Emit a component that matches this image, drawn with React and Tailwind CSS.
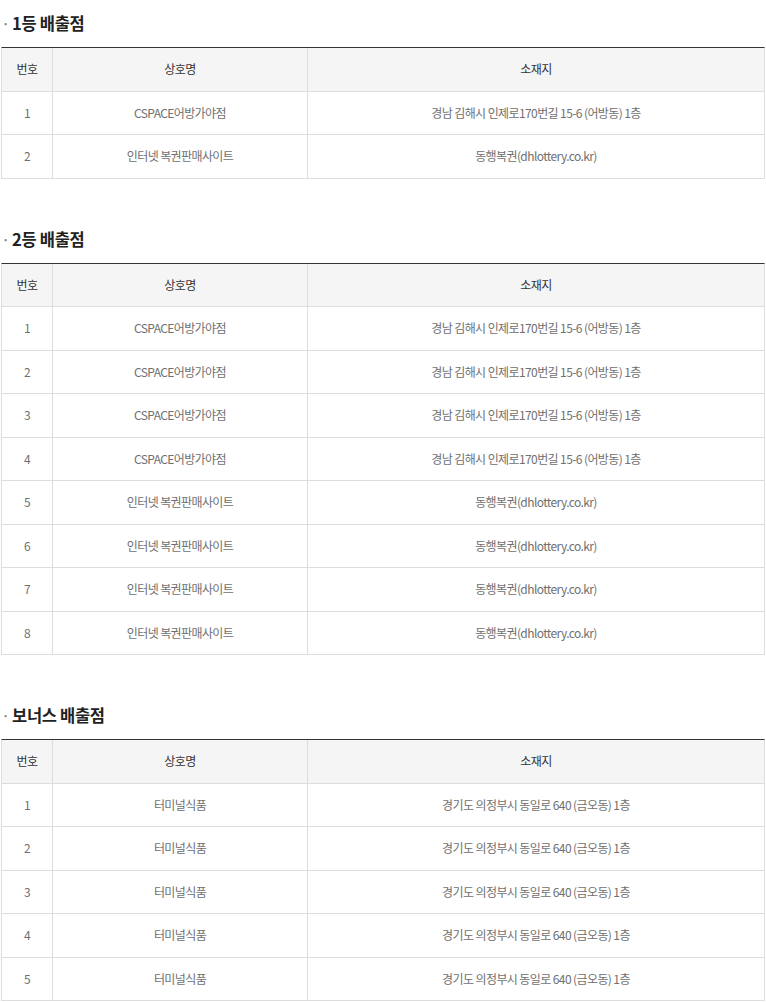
import React from 'react';

const first = [
  { name: 'CSPACE어방가야점', addr: '경남 김해시 인제로170번길 15-6 (어방동) 1층' },
  { name: '인터넷 복권판매사이트', addr: '동행복권(dhlottery.co.kr)' },
];

const second = [
  { name: 'CSPACE어방가야점', addr: '경남 김해시 인제로170번길 15-6 (어방동) 1층' },
  { name: 'CSPACE어방가야점', addr: '경남 김해시 인제로170번길 15-6 (어방동) 1층' },
  { name: 'CSPACE어방가야점', addr: '경남 김해시 인제로170번길 15-6 (어방동) 1층' },
  { name: 'CSPACE어방가야점', addr: '경남 김해시 인제로170번길 15-6 (어방동) 1층' },
  { name: '인터넷 복권판매사이트', addr: '동행복권(dhlottery.co.kr)' },
  { name: '인터넷 복권판매사이트', addr: '동행복권(dhlottery.co.kr)' },
  { name: '인터넷 복권판매사이트', addr: '동행복권(dhlottery.co.kr)' },
  { name: '인터넷 복권판매사이트', addr: '동행복권(dhlottery.co.kr)' },
];

const bonus = Array.from({ length: 5 }, () => ({
  name: '터미널식품',
  addr: '경기도 의정부시 동일로 640 (금오동) 1층',
}));

function StoreTable({ title, rows, first }) {
  return (
    <section className={first ? '' : 'mt-[37px]'}>
      <h3 className="h-[47px] flex items-center text-[16.5px] font-bold text-[#222] tracking-[-0.3px]">
        <span className="w-[12px] pl-[1px] text-[#888] font-normal">·</span>
        {title}
      </h3>
      <div className="ml-[1px] w-[764px] border-t border-t-[#333] border-x border-x-[#ddd] text-[12px] tracking-[-0.6px]">
        <div className="grid grid-cols-[51px_255px_1fr] h-[43.5px] bg-[#f5f5f5] text-[#333] border-b border-[#ddd]">
          <div className="flex items-center justify-center border-r border-[#ddd]">번호</div>
          <div className="flex items-center justify-center border-r border-[#ddd]">상호명</div>
          <div className="flex items-center justify-center">소재지</div>
        </div>
        {rows.map((r, i) => (
          <div
            key={i}
            className="grid grid-cols-[51px_255px_1fr] h-[43.5px] text-[#707070] border-b border-[#ddd]"
          >
            <div className="flex items-center justify-center border-r border-[#ddd]">{i + 1}</div>
            <div className="flex items-center justify-center border-r border-[#ddd]">{r.name}</div>
            <div className="flex items-center justify-center">{r.addr}</div>
          </div>
        ))}
      </div>
    </section>
  );
}

export default function App() {
  return (
    <div
      className="w-[766px] bg-white"
      style={{ fontFamily: '"Noto Sans CJK KR", "Noto Sans", sans-serif' }}
    >
      <StoreTable title="1등 배출점" rows={first} first />
      <StoreTable title="2등 배출점" rows={second} />
      <StoreTable title="보너스 배출점" rows={bonus} />
    </div>
  );
}
